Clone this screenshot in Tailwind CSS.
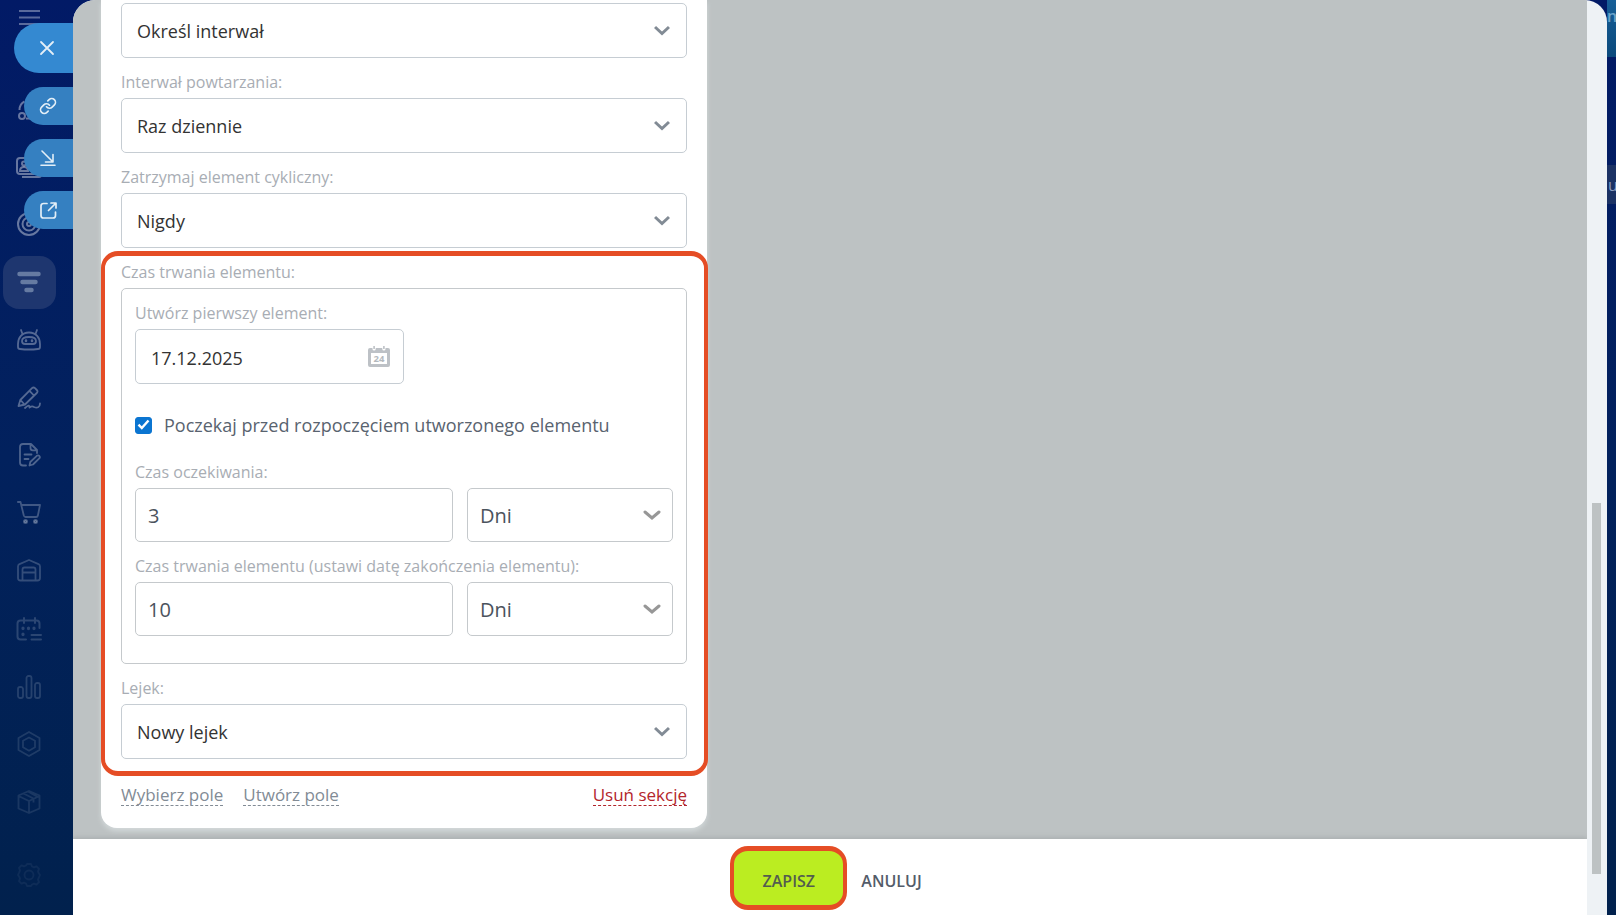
<!DOCTYPE html>
<html lang="pl">
<head>
    <meta charset="UTF-8">
    <title>Element cykliczny</title>
    <script src="https://cdn.jsdelivr.net/npm/@tailwindcss/browser@4"></script>
</head>
<body class="relative flex h-screen overflow-hidden bg-gradient-to-b from-[#021a66] via-[#02215d] to-[#01214d] font-['Open_Sans','Noto_Sans',sans-serif] text-[#333]">

    <!-- left menu -->
    <nav class="flex w-[73px] shrink-0 flex-col overflow-hidden" aria-label="Menu">
        <button type="button" aria-label="Menu" class="ml-[19px] mt-[9px] w-[21px] text-[#5a6a9c]">
            <svg class="h-4 w-[21px]" viewBox="0 0 21 16" fill="none" stroke="currentColor" stroke-width="2"><path d="M0 2h21M0 8.500h21M0 15h21"/></svg>
        </button>
        <ul class="mt-[55px] flex h-[751px] w-[58px] shrink-0 flex-col">
            <li class="flex flex-1 items-center justify-center text-white/40">
                <a href="#" aria-label="Współpraca"><svg class="size-6" viewBox="0 0 24 24" fill="none" stroke="currentColor" stroke-width="2"><circle cx="5" cy="19" r="3"/><circle cx="19" cy="19" r="3"/><circle cx="12" cy="5" r="3"/><path d="M2.500 13c0-4 2-7 5-8.500M21.500 13c0-4-2-7-5-8.500M9 21.500h6"/></svg></a>
            </li>
            <li class="flex flex-1 items-center justify-center text-white/40">
                <a href="#" aria-label="Kontakty"><svg class="h-6 w-[26px]" viewBox="0 0 26 24" fill="none" stroke="currentColor" stroke-width="2"><rect x="1" y="3" width="21" height="16" rx="3"/><path d="M6 22h17a2 2 0 0 0 2-2V8M4 16c0-3 1.500-4 4-4s4 1 4 4zM15 8h4M15 12h4"/><circle cx="8" cy="8.500" r="2"/></svg></a>
            </li>
            <li class="flex flex-1 items-center justify-center text-white/40">
                <a href="#" aria-label="Cele"><svg class="size-6" viewBox="0 0 24 24" fill="none" stroke="currentColor" stroke-width="2"><circle cx="12" cy="12" r="11"/><circle cx="12" cy="12" r="6.500"/><circle cx="12" cy="12" r="2"/></svg></a>
            </li>
            <li class="flex flex-1 items-center justify-center text-[#667ba2]">
                <a href="#" aria-label="CRM" class="flex size-[53px] items-center justify-center rounded-2xl bg-[#1e366f]"><svg class="size-6" viewBox="0 0 24 24" fill="none" stroke="currentColor" stroke-width="4.500" stroke-linecap="round"><path d="M2.500 4h19M5.500 12h13M9.500 20h5"/></svg></a>
            </li>
            <li class="flex flex-1 items-center justify-center text-white/33">
                <a href="#" aria-label="Robot"><svg class="size-6" viewBox="0 0 24 24" fill="none" stroke="currentColor" stroke-width="1.800" stroke-linecap="round"><path d="M4 2l1.500 4M20 2l-1.500 4M12 4.500C5 4.500 1 9.500 1 16v3c0 1.500 1 2 2 2 6 .7 12 .7 18 0 1 0 2-.5 2-2v-3C23 9.500 19 4.500 12 4.500z"/><path d="M12 9c4.500 0 7 1.200 7 4 0 2-1.500 3-3 3H8c-1.500 0-3-1-3-3 0-2.800 2.500-4 7-4z"/><path d="M9 12.500v.5M15 12.500v.5" stroke-width="2.500"/></svg></a>
            </li>
            <li class="flex flex-1 items-center justify-center text-white/33">
                <a href="#" aria-label="Podpis"><svg class="size-6" viewBox="0 0 24 24" fill="none" stroke="currentColor" stroke-width="1.800" stroke-linecap="round" stroke-linejoin="round"><path d="M1.500 20l1.800-6L15 2.200c1-1 2-1 3 0l1.800 1.800c1 1 1 2 0 3L8 18.500zM12.500 4.800l4.500 4.700M3.500 14l4 4.500M8 22c3.500-3 4.500-3 4.500-.5 2-1.500 3-1.500 4.500-.5 3 1.500 6 .5 6-3.500"/></svg></a>
            </li>
            <li class="flex flex-1 items-center justify-center text-white/30">
                <a href="#" aria-label="Dokumenty"><svg class="size-6" viewBox="0 0 24 24" fill="none" stroke="currentColor" stroke-width="1.800" stroke-linecap="round" stroke-linejoin="round"><path d="M9 22.500H6c-2 0-3-1-3-3V4c0-2 1-3 3-3h8l6 6v3M13.500 1v4c0 1.500.8 2.300 2.300 2.300H20M7.500 11.500h7M7.500 16h4M12.500 22.500l.8-3.500 6.500-6.200c1.800-1.300 3.800.8 2.700 2.400L16 21.500z"/></svg></a>
            </li>
            <li class="flex flex-1 items-center justify-center text-white/25">
                <a href="#" aria-label="Sklep"><svg class="size-6" viewBox="0 0 24 24" fill="none" stroke="currentColor" stroke-width="1.800" stroke-linecap="round" stroke-linejoin="round"><path d="M0.900 1h2.600l3.300 13.500c.3 1 .8 1.500 1.800 1.500h10.500c1 0 1.600-.5 1.800-1.500L23 4H4.500"/><circle cx="8.500" cy="20.500" r="1.600" fill="currentColor"/><circle cx="18.500" cy="20.500" r="1.600" fill="currentColor"/></svg></a>
            </li>
            <li class="flex flex-1 items-center justify-center text-white/20">
                <a href="#" aria-label="Magazyn"><svg class="size-6" viewBox="0 0 24 24" fill="none" stroke="currentColor" stroke-width="1.800" stroke-linejoin="round"><path d="M1 7.500c0-1.200.5-1.800 1.500-2.400L12 1l9.500 4.100c1 .6 1.500 1.200 1.500 2.400V19c0 1.500-.8 2.500-2.500 2.500h-17C1.800 21.500 1 20.500 1 19zM5.500 21V10.500c0-1.500.5-2 2-2h9c1.500 0 2 .5 2 2V21M5.500 13.500h13"/></svg></a>
            </li>
            <li class="flex flex-1 items-center justify-center text-white/17">
                <a href="#" aria-label="Rezerwacje"><svg class="h-6 w-[26px]" viewBox="0 0 26 24" fill="none" stroke="currentColor" stroke-width="2" stroke-linecap="round"><path d="M10 22.500H4.500c-2 0-3-1-3-3V6.500c0-2 1-3 3-3h16c2 0 3 1 3 3V11M8 1v5M19 1v5M15.500 18H25M15.500 22.500H25"/><path d="M7 11v.6M12.500 11v.6M18 11v.6M7 17v.6" stroke-width="3.200"/></svg></a>
            </li>
            <li class="flex flex-1 items-center justify-center text-white/15">
                <a href="#" aria-label="Analityka"><svg class="size-6" viewBox="0 0 24 24" fill="none" stroke="currentColor" stroke-width="1.800"><rect x="1" y="12" width="5" height="11" rx="2"/><rect x="9.500" y="1" width="5" height="22" rx="2"/><rect x="18" y="8" width="5" height="15" rx="2"/></svg></a>
            </li>
            <li class="flex flex-1 items-center justify-center text-white/12">
                <a href="#" aria-label="Aplikacje"><svg class="h-[26px] w-6" viewBox="0 0 24 26" fill="none" stroke="currentColor" stroke-width="1.800" stroke-linejoin="round"><path d="M12 1l10.500 6v12L12 25 1.500 19V7z"/><path d="M12 6.500l6 3.300v6.500l-6 3.400-6-3.400V9.800z"/></svg></a>
            </li>
            <li class="flex flex-1 items-center justify-center text-white/10">
                <a href="#" aria-label="Zasoby"><svg class="size-6" viewBox="0 0 24 24" fill="none" stroke="currentColor" stroke-width="1.800" stroke-linejoin="round"><path d="M12 1l10.500 4.500v13L12 23 1.500 18.500v-13zM1.500 6L12 11l10.500-5M12 11v12M6.500 3.500l10 5v4M11 1.500l9 5"/></svg></a>
            </li>
        </ul>
        <a href="#" aria-label="Ustawienia" class="ml-[17px] mt-8 w-6 text-white/5">
            <svg class="size-6" viewBox="0 0 24 24" fill="none" stroke="currentColor" stroke-width="1.800" stroke-linejoin="round"><circle cx="12" cy="12" r="4.500"/><path d="M10 1h4l1 2.500 2 .8 2.500-1 2.500 2.500-1 2.500.8 2L23 12l-1.200 2.700-.8 2 1 2.500-2.500 2.500-2.500-1-2 .8L14 23h-4l-1-2.500-2-.8-2.500 1L2 18.200l1-2.500-.8-2L1 12l1.200-2.700.8-2-1-2.500 2.500-2.500 2.500 1 2-.8z"/></svg>
        </a>
    </nav>

    <!-- slider tabs, over the menu -->
    <div class="absolute left-0 top-[23px] flex w-[73px] flex-col items-end gap-[14px] text-[#e3eef7]">
        <button type="button" aria-label="Zamknij" class="flex h-[50px] w-[59px] items-center rounded-l-full bg-[#3489d1] pl-[25px]">
            <svg class="size-4" viewBox="0 0 16 16" fill="none" stroke="currentColor" stroke-width="1.800" stroke-linecap="round"><path d="M2 2l12 12M14 2L2 14"/></svg>
        </button>
        <button type="button" aria-label="Kopiuj link" class="flex h-[38px] w-[49px] items-center rounded-l-full bg-[#3580c1] pl-[15px]">
            <svg class="size-[18px]" viewBox="0 0 24 24" fill="none" stroke="currentColor" stroke-width="2.200" stroke-linecap="round" stroke-linejoin="round"><path d="M10 13a5 5 0 0 0 7.540.54l3-3a5 5 0 0 0-7.070-7.070l-1.720 1.710"/><path d="M14 11a5 5 0 0 0-7.540-.54l-3 3a5 5 0 0 0 7.070 7.070l1.710-1.710"/></svg>
        </button>
        <button type="button" aria-label="Zwiń" class="flex h-[38px] w-[49px] items-center rounded-l-full bg-[#3580c1] pl-4">
            <svg class="size-4" viewBox="0 0 16 16" fill="none" stroke="currentColor" stroke-width="1.600" stroke-linecap="round" stroke-linejoin="round"><path d="M2 1l11 11M13 4.500V12H5.500M1 15.200h14"/></svg>
        </button>
        <button type="button" aria-label="Otwórz w nowym oknie" class="flex h-[38px] w-[49px] items-center rounded-l-full bg-[#3580c1] pl-4">
            <svg class="size-[17px]" viewBox="0 0 17 17" fill="none" stroke="currentColor" stroke-width="1.700" stroke-linecap="round" stroke-linejoin="round"><path d="M7 1.500H3.500c-1.400 0-2.500 1-2.500 2.500v9.500C1 15 2 16 3.500 16H13c1.500 0 2.500-1 2.500-2.500V10M11 1h5v5M15.500 1.500l-7 7"/></svg>
        </button>
    </div>

    <!-- slider panel -->
    <div class="flex min-w-0 flex-1 overflow-hidden rounded-t-[22px] bg-[#eef2f5]">
        <form id="dealForm" class="flex min-w-0 flex-1 flex-col overflow-hidden bg-[#bdc2c3]">
            <div class="min-h-0 flex-1 overflow-hidden px-7">
                <div class="w-full max-w-[606px] rounded-b-[16px] bg-white pt-[3px] shadow-[0_3px_5px_#d3d9da]">
                    <div class="px-5">
                        <div class="relative">
                            <select id="mode" aria-label="Powtarzanie" class="h-[55px] w-full appearance-none rounded-[5px] border border-[#c6cdd3] bg-white px-[15px] pt-[2px] text-[18px]">
                                <option>Określ interwał</option>
                            </select>
                            <svg class="pointer-events-none absolute right-[17px] top-[22px] h-3 w-4 text-[#828b95]" viewBox="0 0 16 12" fill="none" stroke="currentColor" stroke-width="3"><path d="M1 2l7 6.500L15 2"/></svg>
                        </div>
                        <label for="interval" class="block pb-1 pt-3 text-[16px] leading-6 text-[#a8adb4]">Interwał powtarzania:</label>
                        <div class="relative">
                            <select id="interval" class="h-[55px] w-full appearance-none rounded-[5px] border border-[#c6cdd3] bg-white px-[15px] pt-[2px] text-[18px]">
                                <option>Raz dziennie</option>
                            </select>
                            <svg class="pointer-events-none absolute right-[17px] top-[22px] h-3 w-4 text-[#828b95]" viewBox="0 0 16 12" fill="none" stroke="currentColor" stroke-width="3"><path d="M1 2l7 6.500L15 2"/></svg>
                        </div>
                        <label for="stop" class="block pb-1 pt-3 text-[16px] leading-6 text-[#a8adb4]">Zatrzymaj element cykliczny:</label>
                        <div class="relative">
                            <select id="stop" class="h-[55px] w-full appearance-none rounded-[5px] border border-[#c6cdd3] bg-white px-[15px] pt-[2px] text-[18px]">
                                <option>Nigdy</option>
                            </select>
                            <svg class="pointer-events-none absolute right-[17px] top-[22px] h-3 w-4 text-[#828b95]" viewBox="0 0 16 12" fill="none" stroke="currentColor" stroke-width="3"><path d="M1 2l7 6.500L15 2"/></svg>
                        </div>
                    </div>

                    <section class="-mr-px mt-[3px] rounded-[17px] border-x-4 border-y-[5px] border-[#e54d25] pb-3 pl-4 pr-[17px] pt-1">
                        <h2 class="pb-1 text-[16px] leading-6 text-[#a8adb4]">Czas trwania elementu:</h2>
                        <div class="rounded-[5px] border border-[#c5c9cc] px-[13px] pb-[27px]">
                            <label for="firstDate" class="block pb-1 pt-3 text-[16px] leading-6 text-[#a8adb4]">Utwórz pierwszy element:</label>
                            <div class="relative w-1/2">
                                <input type="text" id="firstDate" value="17.12.2025" class="h-[55px] w-full rounded-[5px] border border-[#c6cdd3] pl-[15px] pr-12 pt-[2px] text-[18px]">
                                <svg class="pointer-events-none absolute right-[14px] top-4 size-[22px]" viewBox="0 0 22 22"><path fill="#bdc1c6" d="M2 3h2.500v1a1.600 1.600 0 0 0 3.200 0V3h6.600v1a1.600 1.600 0 0 0 3.200 0V3H20a2 2 0 0 1 2 2v15a2 2 0 0 1-2 2H2a2 2 0 0 1-2-2V5a2 2 0 0 1 2-2zM3 8v11h16V8zM5.300 1h1.600v3H5.300zM15.100 1h1.600v3h-1.600z"/><text x="11" y="17" text-anchor="middle" font-size="9.500" font-weight="700" fill="#b4b9be">24</text></svg>
                            </div>
                            <div class="relative flex items-center gap-3 pb-[11px] pt-[29px]">
                                <input type="checkbox" id="wait" checked class="peer size-[17px] appearance-none rounded-[3px] border border-[#767676] checked:border-[#0b75d1] checked:bg-[#0b75d1]">
                                <svg class="pointer-events-none absolute left-0 top-8 hidden size-[17px] peer-checked:block" viewBox="0 0 17 17"><path d="M3.500 8.700l3.300 3.300 6.700-7.500" fill="none" stroke="#fff" stroke-width="2.400"/></svg>
                                <label for="wait" class="text-[18px] leading-6 text-[#59636f]">Poczekaj przed rozpoczęciem utworzonego elementu</label>
                            </div>
                            <label for="waitTime" class="block pb-1 pt-3 text-[16px] leading-6 text-[#a8adb4]">Czas oczekiwania:</label>
                            <div class="flex gap-[14px]">
                                <input type="text" id="waitTime" value="3" class="h-[54px] min-w-0 flex-1 rounded-[5px] border border-[#c5c9cc] px-3 pt-px text-[20px] text-[#4b535d]">
                                <div class="relative w-[206px]">
                                    <select aria-label="Jednostka czasu oczekiwania" class="h-[54px] w-full appearance-none rounded-[5px] border border-[#c5c9cc] bg-white px-3 pt-px text-[20px] text-[#4b535d]">
                                        <option>Dni</option>
                                    </select>
                                    <svg class="pointer-events-none absolute right-3 top-[21px] h-3 w-[18px] text-[#979797]" viewBox="0 0 18 12" fill="none" stroke="currentColor" stroke-width="3" stroke-linecap="round"><path d="M2 3l7 6 7-6"/></svg>
                                </div>
                            </div>
                            <label for="duration" class="block pb-1 pt-3 text-[16px] leading-6 text-[#a8adb4]">Czas trwania elementu (ustawi datę zakończenia elementu):</label>
                            <div class="flex gap-[14px]">
                                <input type="text" id="duration" value="10" class="h-[54px] min-w-0 flex-1 rounded-[5px] border border-[#c5c9cc] px-3 pt-px text-[20px] text-[#4b535d]">
                                <div class="relative w-[206px]">
                                    <select aria-label="Jednostka czasu trwania" class="h-[54px] w-full appearance-none rounded-[5px] border border-[#c5c9cc] bg-white px-3 pt-px text-[20px] text-[#4b535d]">
                                        <option>Dni</option>
                                    </select>
                                    <svg class="pointer-events-none absolute right-3 top-[21px] h-3 w-[18px] text-[#979797]" viewBox="0 0 18 12" fill="none" stroke="currentColor" stroke-width="3" stroke-linecap="round"><path d="M2 3l7 6 7-6"/></svg>
                                </div>
                            </div>
                        </div>
                        <label for="funnel" class="block pb-1 pt-3 text-[16px] leading-6 text-[#a8adb4]">Lejek:</label>
                        <div class="relative">
                            <select id="funnel" class="h-[55px] w-full appearance-none rounded-[5px] border border-[#c6cdd3] bg-white px-[15px] pt-[2px] text-[18px]">
                                <option>Nowy lejek</option>
                            </select>
                            <svg class="pointer-events-none absolute right-[17px] top-[22px] h-3 w-4 text-[#828b95]" viewBox="0 0 16 12" fill="none" stroke="currentColor" stroke-width="3"><path d="M1 2l7 6.500L15 2"/></svg>
                        </div>
                    </section>

                    <div class="flex gap-5 px-5 pb-[22px] pt-2 text-[17px] leading-[21px] text-[#828b95]">
                        <a href="#" class="border-b border-dashed border-[#828b95]">Wybierz pole</a>
                        <a href="#" class="border-b border-dashed border-[#828b95]">Utwórz pole</a>
                        <a href="#" class="ml-auto border-b border-dashed border-[#b3252b] text-[#b3252b]">Usuń sekcję</a>
                    </div>
                </div>
            </div>

            <!-- footer -->
            <div class="flex h-[76px] items-center justify-center gap-[14px] bg-white pt-[2px] text-[16px] font-semibold shadow-[0_-2px_4px_#acb1b2]">
                <button type="submit" class="h-16 w-[117px] rounded-[18px] border-x-4 border-y-[5px] border-[#e54d25] bg-[#bbed21] pt-[5px] text-[#535c4f]">ZAPISZ</button>
                <button type="button" class="mr-2 h-16 pt-[5px] text-[#535c69]">ANULUJ</button>
            </div>
        </form>

        <!-- scrollbar -->
        <div class="w-5 shrink-0 pl-[5px] pt-[503px]">
            <div class="h-[371px] w-[9px] bg-[#bdc2c3]"></div>
        </div>
    </div>

    <!-- page behind the slider -->
    <div class="flex w-[9px] shrink-0 flex-col overflow-hidden text-[#8b9cc0]">
        <div class="h-[57px] bg-gradient-to-b from-[#175f98] to-[#0b4a7c] pt-1 text-[16px] font-semibold text-[#6ba3c9]">n</div>
        <div class="mt-[108px] h-[39px] bg-[#1b3264] pl-px pt-2 text-[16px]">u</div>
    </div>

</body>
</html>
